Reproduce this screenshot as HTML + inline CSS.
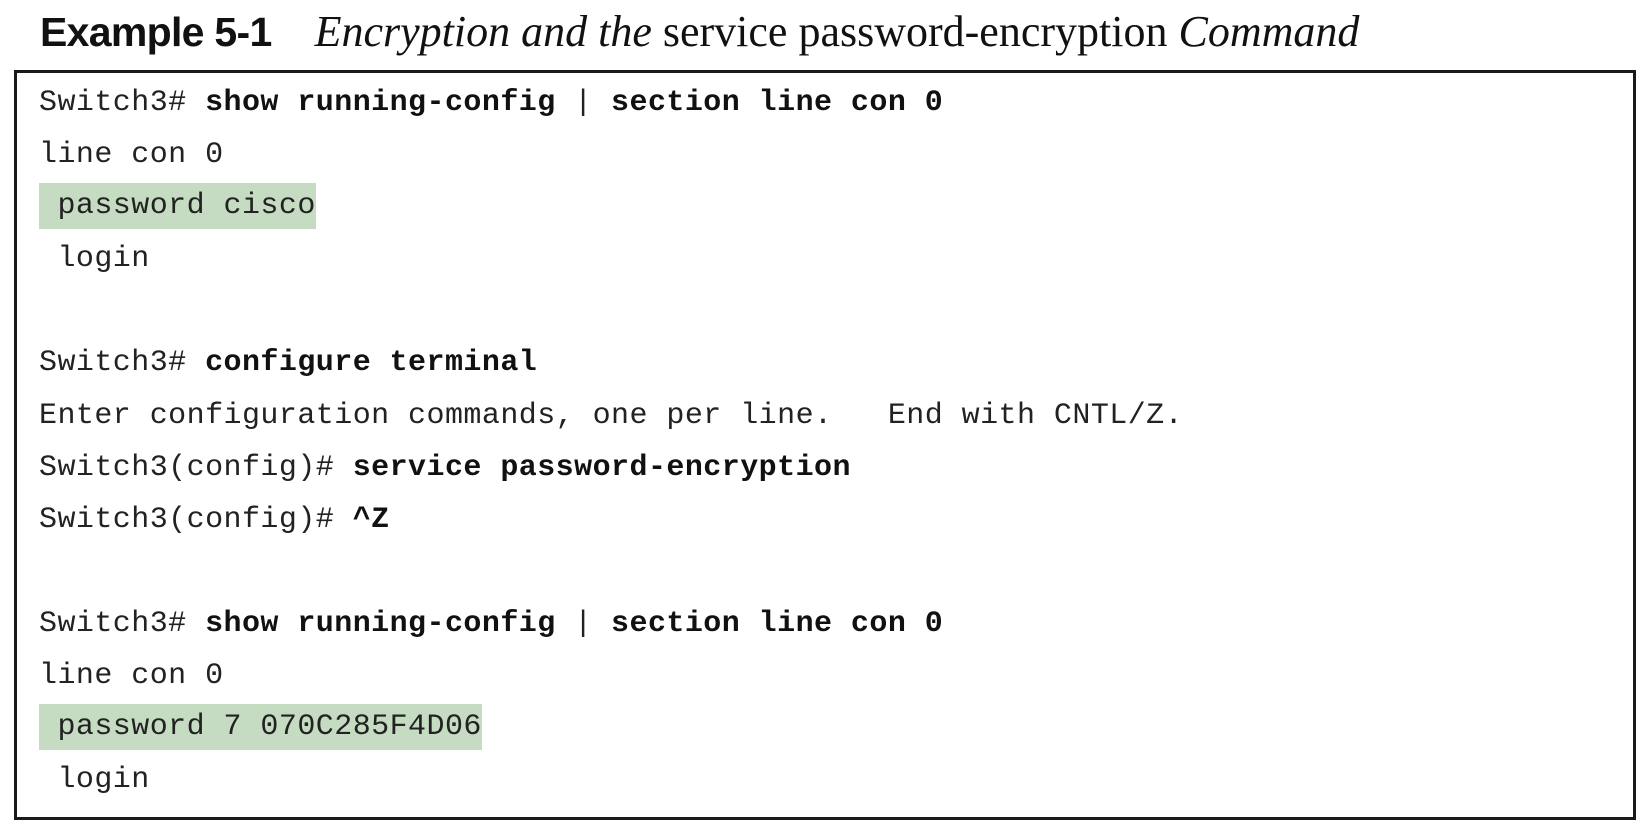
<!DOCTYPE html>
<html><head><meta charset="utf-8"><style>
html,body{margin:0;padding:0;background:#fff;width:1648px;height:822px;overflow:hidden}
.title{position:absolute;left:40px;top:8px;height:48px;line-height:48px;white-space:nowrap;color:#111}
.ex{font-family:"Liberation Sans",sans-serif;font-weight:bold;font-size:41px;letter-spacing:-0.7px}
.cap{font-family:"Liberation Serif",serif;font-size:44px;margin-left:43px}
.box{position:absolute;left:14px;top:70px;width:1616px;height:744px;border:3px solid #1a1a1a}
.code{position:absolute;left:22px;top:4px;font-family:"Liberation Mono",monospace;font-size:30px;letter-spacing:0.45px;color:#222}
.l{height:52.1px;line-height:52.1px;white-space:pre}
.hl{display:inline-block;background:#c5dcc3;height:46px;line-height:46px;vertical-align:middle}
b{font-weight:bold;color:#111}
</style></head><body>
<div class="title"><span class="ex">Example 5-1</span><span class="cap"><i>Encryption and the</i> service password-encryption <i>Command</i></span></div>
<div class="box"><div class="code">
<div class="l">Switch3# <b>show running-config</b> | <b>section line con 0</b></div>
<div class="l">line con 0</div>
<div class="l"><span class="hl"> password cisco</span></div>
<div class="l"> login</div>
<div class="l"> </div>
<div class="l">Switch3# <b>configure terminal</b></div>
<div class="l">Enter configuration commands, one per line.   End with CNTL/Z.</div>
<div class="l">Switch3(config)# <b>service password-encryption</b></div>
<div class="l">Switch3(config)# <b>^Z</b></div>
<div class="l"> </div>
<div class="l">Switch3# <b>show running-config</b> | <b>section line con 0</b></div>
<div class="l">line con 0</div>
<div class="l"><span class="hl"> password 7 070C285F4D06</span></div>
<div class="l"> login</div>
</div></div>
</body></html>
